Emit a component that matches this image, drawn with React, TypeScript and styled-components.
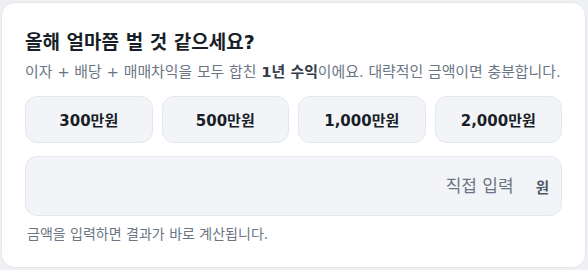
import styled, { createGlobalStyle } from "styled-components";

const GlobalStyle = createGlobalStyle`
  body {
    margin: 0;
    background: #eef0f3;
    font-family: "DejaVu Sans", "Noto Sans CJK KR", sans-serif;
  }
`;

const Page = styled.div`
  width: 588px;
  height: 270px;
  padding: 2px 2px 2px 1px;
  box-sizing: border-box;
`;

const Card = styled.div`
  height: 100%;
  box-sizing: border-box;
  background: #ffffff;
  border: 1px solid #e5e8eb;
  border-radius: 14px;
  padding: 26px 23px 0 23px;
  display: flex;
  flex-direction: column;
`;

const Title = styled.h2`
  margin: 0;
  font-size: 19px;
  font-weight: 700;
  color: #191f28;
  line-height: 26px;
`;

const Desc = styled.p`
  margin: 6px 0 0;
  font-size: 14.9px;
  color: #6b7684;
  line-height: 22px;
  white-space: nowrap;

  b {
    color: #333d4b;
    font-weight: 700;
  }
`;

const Presets = styled.div`
  display: grid;
  grid-template-columns: repeat(4, 1fr);
  gap: 9px;
  margin-top: 13px;
`;

const PresetButton = styled.button`
  height: 47px;
  background: #f2f4f8;
  border: 1px solid #e3e7ee;
  border-radius: 12px;
  font-family: inherit;
  font-size: 15px;
  font-weight: 700;
  color: #191f28;
  cursor: pointer;
`;

const InputBox = styled.label`
  margin-top: 13px;
  height: 60px;
  box-sizing: border-box;
  background: #f2f4f8;
  border: 1px solid #e3e7ee;
  border-radius: 12px;
  display: flex;
  align-items: center;
  padding: 0 12px 0 16px;
  gap: 20px;
`;

const AmountInput = styled.input`
  flex: 1;
  min-width: 0;
  border: none;
  background: transparent;
  outline: none;
  text-align: right;
  font-family: inherit;
  font-size: 17px;
  color: #191f28;

  &::placeholder {
    color: #6b7684;
  }
`;

const Unit = styled.span`
  font-size: 14.5px;
  font-weight: 700;
  color: #4e5968;
`;

const Hint = styled.p`
  margin: 8px 0 0 2px;
  font-size: 14px;
  line-height: 20px;
  color: #6b7684;
`;

const presets = ["300만원", "500만원", "1,000만원", "2,000만원"];

export default function App() {
  return (
    <Page>
      <GlobalStyle />
      <Card>
        <Title>올해 얼마쯤 벌 것 같으세요?</Title>
        <Desc>
          이자 + 배당 + 매매차익을 모두 합친 <b>1년 수익</b>이에요. 대략적인 금액이면 충분합니다.
        </Desc>
        <Presets>
          {presets.map((p) => (
            <PresetButton key={p}>{p}</PresetButton>
          ))}
        </Presets>
        <InputBox>
          <AmountInput placeholder="직접 입력" inputMode="numeric" />
          <Unit>원</Unit>
        </InputBox>
        <Hint>금액을 입력하면 결과가 바로 계산됩니다.</Hint>
      </Card>
    </Page>
  );
}
